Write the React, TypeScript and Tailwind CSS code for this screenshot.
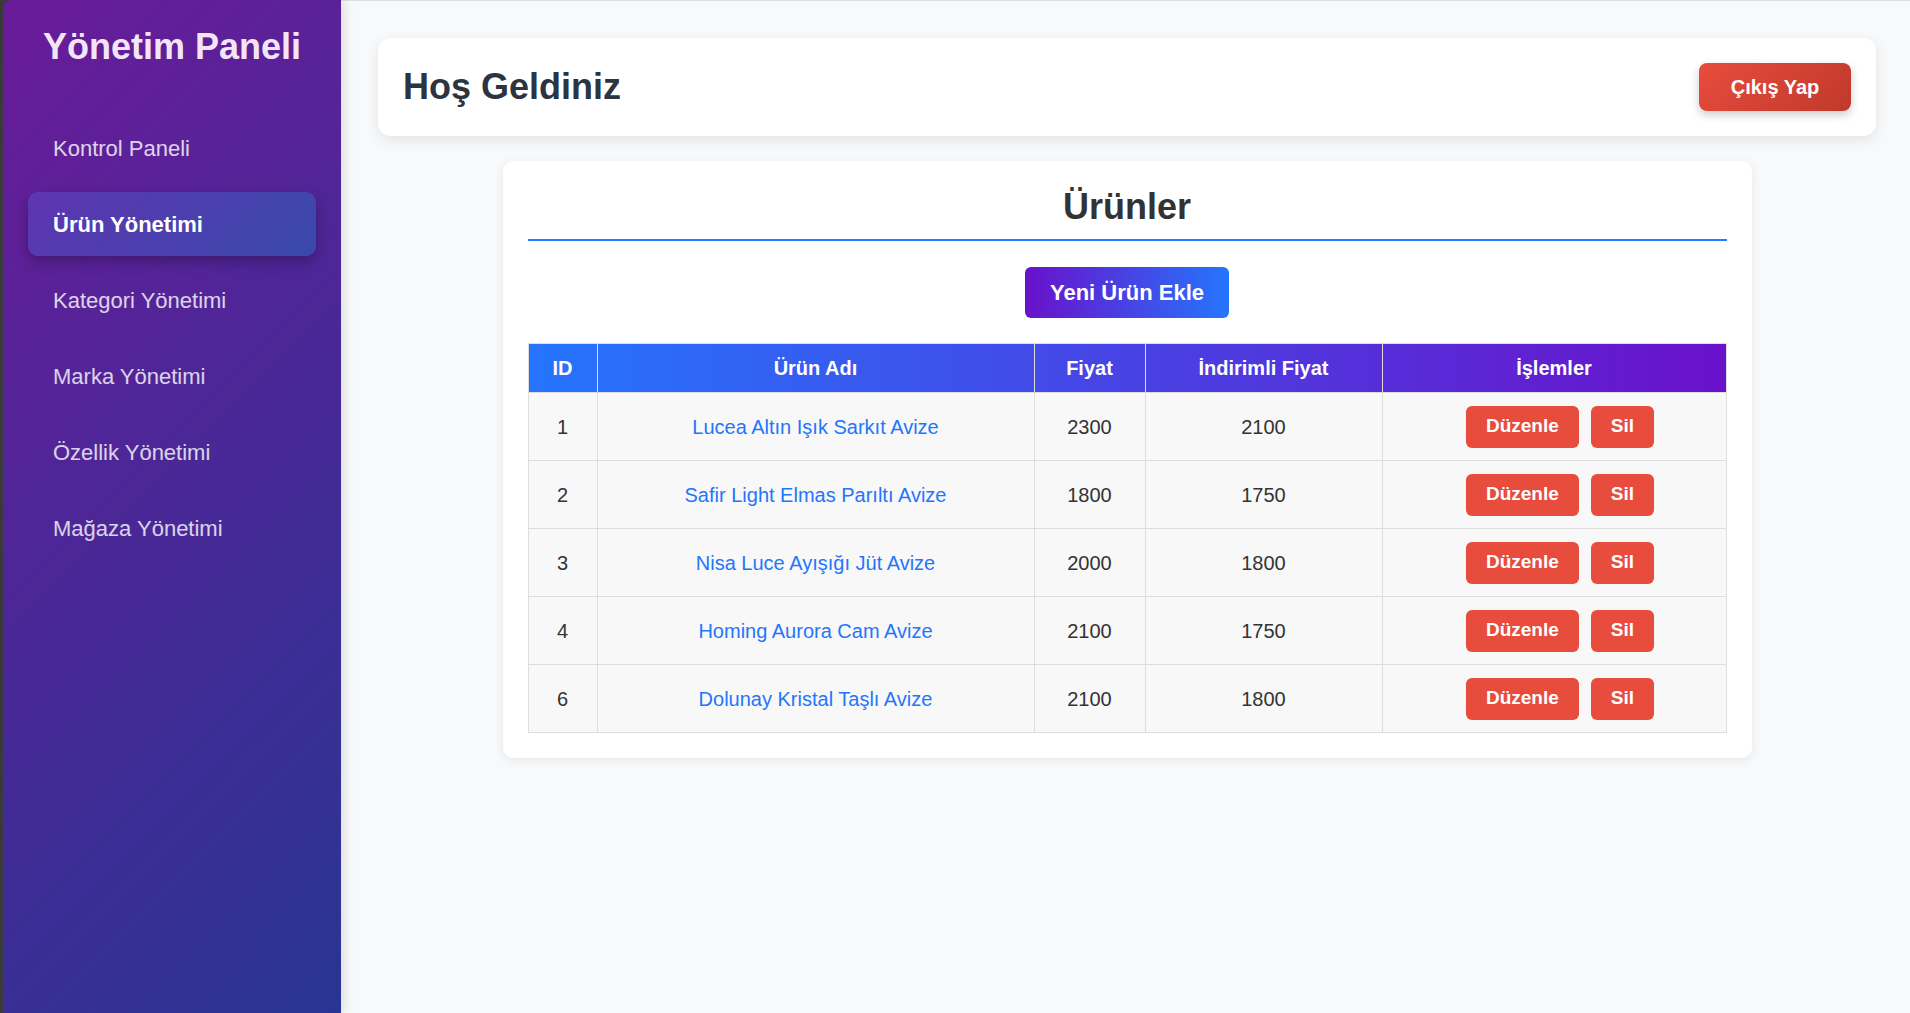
import React from "react";

type Product = {
  id: number;
  name: string;
  price: number;
  discount: number;
};

const products: Product[] = [
  { id: 1, name: "Lucea Altın Işık Sarkıt Avize", price: 2300, discount: 2100 },
  { id: 2, name: "Safir Light Elmas Parıltı Avize", price: 1800, discount: 1750 },
  { id: 3, name: "Nisa Luce Ayışığı Jüt Avize", price: 2000, discount: 1800 },
  { id: 4, name: "Homing Aurora Cam Avize", price: 2100, discount: 1750 },
  { id: 6, name: "Dolunay Kristal Taşlı Avize", price: 2100, discount: 1800 },
];

const navItems = [
  "Kontrol Paneli",
  "Ürün Yönetimi",
  "Kategori Yönetimi",
  "Marka Yönetimi",
  "Özellik Yönetimi",
  "Mağaza Yönetimi",
];

function Sidebar() {
  return (
    <aside className="relative z-10 w-[338px] shrink-0 rounded-tl-[8px] bg-[linear-gradient(135deg,#6a1b9a,#283593)] px-[25px] pt-[26px] shadow-[3px_0_12px_rgba(0,0,0,0.12)]">
      <h1 className="text-center text-[36px] font-bold leading-[41px] text-[#f3e5f5]">
        Yönetim Paneli
      </h1>
      <nav className="mt-[49px] flex flex-col gap-[12px]">
        {navItems.map((item) => {
          const active = item === "Ürün Yönetimi";
          return (
            <a
              key={item}
              href="#"
              className={
                active
                  ? "flex h-[64px] items-center rounded-[10px] bg-[linear-gradient(135deg,#5e35b1,#3949ab)] px-[25px] text-[22px] font-bold text-white shadow-[0_6px_14px_rgba(0,0,0,0.25)]"
                  : "flex h-[64px] items-center rounded-[10px] px-[25px] text-[22px] text-white/80"
              }
            >
              {item}
            </a>
          );
        })}
      </nav>
    </aside>
  );
}

function ProductsTable() {
  return (
    <table className="w-full table-fixed border-collapse border border-[#ddd] text-center text-[20px]">
      <thead>
        <tr className="bg-[linear-gradient(to_right,#2575fc,#6a11cb)] text-white">
          <th className="h-[49px] w-[69px] border border-[#ddd] font-bold">ID</th>
          <th className="w-[437px] border border-[#ddd] font-bold">Ürün Adı</th>
          <th className="w-[111px] border border-[#ddd] font-bold">Fiyat</th>
          <th className="w-[237px] border border-[#ddd] font-bold">İndirimli Fiyat</th>
          <th className="border border-[#ddd] font-bold">İşlemler</th>
        </tr>
      </thead>
      <tbody>
        {products.map((p) => (
          <tr key={p.id} className="bg-[#f8f8f8] text-[#333]">
            <td className="h-[68px] border border-[#ddd]">{p.id}</td>
            <td className="border border-[#ddd]">
              <a href="#" className="text-[#2575fc]">
                {p.name}
              </a>
            </td>
            <td className="border border-[#ddd]">{p.price}</td>
            <td className="border border-[#ddd]">{p.discount}</td>
            <td className="border border-[#ddd]">
              <div className="flex items-center justify-center gap-[12px] pl-[12px]">
                <button className="h-[42px] rounded-[6px] bg-[#e74c3c] px-[20px] text-[19px] font-bold text-white">
                  Düzenle
                </button>
                <button className="h-[42px] rounded-[6px] bg-[#e74c3c] px-[20px] text-[19px] font-bold text-white">
                  Sil
                </button>
              </div>
            </td>
          </tr>
        ))}
      </tbody>
    </table>
  );
}

export default function App() {
  return (
    <div className="flex h-[1013px] w-full bg-[#3a3a3a] pl-[3px] font-['Liberation_Sans',Arial,sans-serif]">
      <div className="flex flex-1 overflow-hidden rounded-tl-[8px]">
        <Sidebar />
        <main className="flex-1 border-t border-[#dcdde0] bg-[#f8f9fa] pl-[37px] pr-[34px] pt-[37px]">
          <header className="flex h-[98px] items-center justify-between rounded-[13px] bg-white px-[25px] shadow-[0_4px_14px_rgba(0,0,0,0.09)]">
            <h2 className="text-[36px] font-bold text-[#2c3440]">Hoş Geldiniz</h2>
            <button className="h-[48px] w-[152px] rounded-[8px] bg-[linear-gradient(135deg,#e74c3c,#c0392b)] text-[20px] font-bold text-white shadow-[0_4px_10px_rgba(0,0,0,0.2)]">
              Çıkış Yap
            </button>
          </header>

          <section className="mx-auto mt-[25px] w-full max-w-[1249px] rounded-[10px] bg-white p-[25px] shadow-[0_2px_10px_rgba(0,0,0,0.08)]">
            <h2 className="border-b-2 border-[#2979ff] pb-[12px] text-center text-[36px] font-bold leading-[41px] text-[#333]">
              Ürünler
            </h2>
            <div className="mt-[26px] flex justify-center">
              <button className="rounded-[6px] bg-[linear-gradient(to_right,#6a11cb,#2575fc)] px-[25px] py-[13px] text-[22px] font-bold leading-[25px] text-white">
                Yeni Ürün Ekle
              </button>
            </div>
            <div className="mt-[25px]">
              <ProductsTable />
            </div>
          </section>
        </main>
      </div>
    </div>
  );
}
